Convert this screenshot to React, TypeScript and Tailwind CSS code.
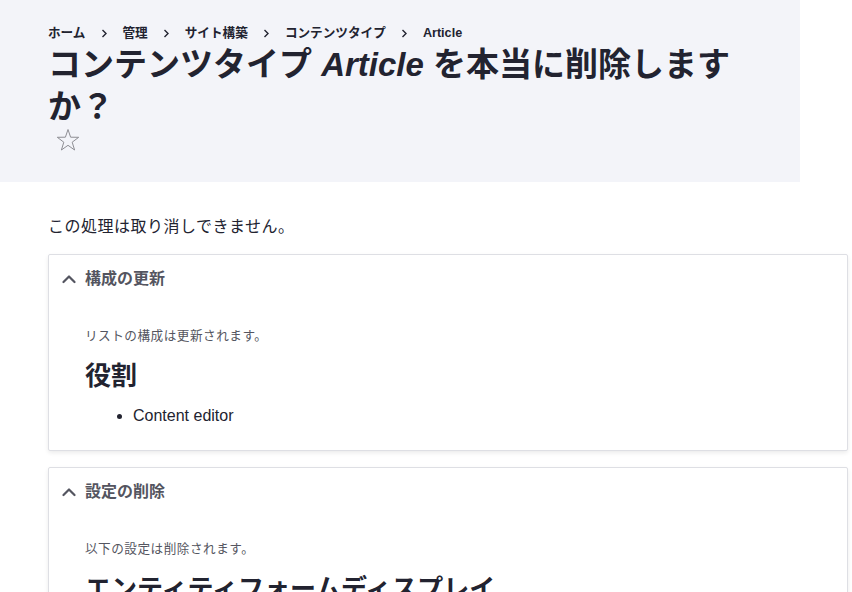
import React from "react";

const FONT = { fontFamily: '"Liberation Sans", "Noto Sans CJK JP", sans-serif' };

function Sep() {
  return (
    <svg className="mx-[15px] w-[7px] h-[9px] shrink-0" viewBox="0 0 7 9" fill="none">
      <path d="M1.5 1 L5 4.5 L1.5 8" stroke="#222330" strokeWidth="1.4" />
    </svg>
  );
}

function Chevron() {
  return (
    <svg className="w-[14px] h-[10px]" viewBox="0 0 14 10" fill="none">
      <path d="M1.5 8 L7 2.5 L12.5 8" stroke="#545560" strokeWidth="2.2" strokeLinecap="round" strokeLinejoin="round" />
    </svg>
  );
}

function Card({ title, desc, heading, items }: { title: string; desc: string; heading: string; items: string[] }) {
  return (
    <div className="w-[800px] border border-[#dedfe4] rounded-[2px] shadow-[0_2px_4px_rgba(0,0,0,0.08)] bg-white">
      <div className="flex items-center pl-[13px] pt-[12px] pb-[12px] h-[48px]">
        <Chevron />
        <span className="ml-[9px] text-[16px] leading-[24px] font-bold text-[#545560]">{title}</span>
      </div>
      <div className="pl-[36px] pt-[23px] pb-[22px]">
        <div className="text-[12.64px] leading-[20px] tracking-[0.5px] text-[#545560]">{desc}</div>
        <h2 className="mt-[14px] text-[26px] leading-[33px] font-bold text-[#222330]">{heading}</h2>
        <ul className="mt-[11px] pl-[48px] list-disc">
          {items.map((i) => (
            <li key={i} className="text-[16px] leading-[24px] text-[#222330]">{i}</li>
          ))}
        </ul>
      </div>
    </div>
  );
}

export default function App() {
  const crumbs = ["ホーム", "管理", "サイト構築", "コンテンツタイプ", "Article"];
  return (
    <div className="w-[852px] h-[592px] overflow-hidden bg-white" style={FONT}>
      <div className="w-[800px] h-[182px] bg-[#f3f4f9] pl-[48px] pr-[48px] pt-[25px]">
        <nav className="flex items-center h-[16px] text-[12.64px] font-bold text-[#222330]">
          {crumbs.map((c, i) => (
            <React.Fragment key={c}>
              {i > 0 && <Sep />}
              <span>{c}</span>
            </React.Fragment>
          ))}
        </nav>
        <h1 className="mt-[3px] text-[33px] leading-[42px] font-bold text-[#222330]">
          コンテンツタイプ <em className="italic">Article</em> を本当に削除しますか？
        </h1>
        <div className="ml-[8px] h-[24px] w-[24px]">
          <svg viewBox="0 0 24 24" className="w-[24px] h-[24px]" fill="none">
            <path
              d="M12 1.5 L14.6 9.2 L22.7 9.3 L16.2 14.2 L18.6 22 L12 17.3 L5.4 22 L7.8 14.2 L1.3 9.3 L9.4 9.2 Z"
              stroke="#8e8e94"
              strokeWidth="1"
              strokeLinejoin="miter"
            />
          </svg>
        </div>
      </div>
      <div className="pl-[48px] pt-[33px]">
        <p className="text-[16px] leading-[24px] tracking-[0.5px] text-[#222330]">この処理は取り消しできません。</p>
        <div className="mt-[15px] flex flex-col gap-[16px]">
          <Card title="構成の更新" desc="リストの構成は更新されます。" heading="役割" items={["Content editor"]} />
          <Card
            title="設定の削除"
            desc="以下の設定は削除されます。"
            heading="エンティティフォームディスプレイ"
            items={["Article"]}
          />
        </div>
      </div>
    </div>
  );
}
